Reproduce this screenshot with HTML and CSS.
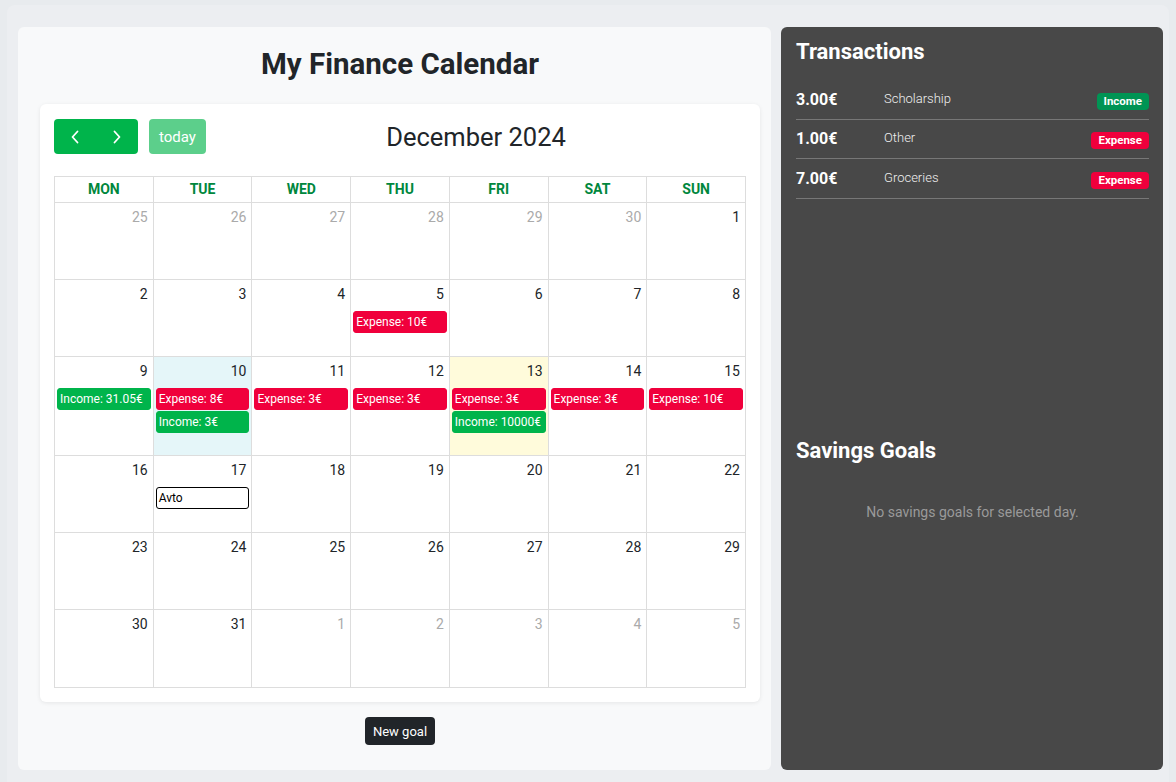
FILE: index.html
```html
<!DOCTYPE html>
<html lang="en">
<head>
<meta charset="utf-8">
<title>My Finance Calendar</title>
<link rel="stylesheet" href="styles.css">
</head>
<body>
<div class="app">
  <div class="layout">
    <main class="left-panel">
      <h2 class="page-title">My Finance Calendar</h2>
      <section class="cal-card">
        <div class="toolbar">
          <div class="tb-left">
            <div class="btn-group">
              <button class="btn btn-green btn-icon" aria-label="prev">
                <svg width="10" height="14" viewBox="0 0 10 14"><path d="M7.5 1.5 L2.5 7 L7.5 12.5" fill="none" stroke="#fff" stroke-width="1.8" stroke-linecap="round" stroke-linejoin="round"/></svg>
              </button>
              <button class="btn btn-green btn-icon" aria-label="next">
                <svg width="10" height="14" viewBox="0 0 10 14"><path d="M2.5 1.5 L7.5 7 L2.5 12.5" fill="none" stroke="#fff" stroke-width="1.8" stroke-linecap="round" stroke-linejoin="round"/></svg>
              </button>
            </div>
            <button class="btn btn-today">today</button>
          </div>
          <h2 class="cal-title">December 2024</h2>
          <div class="tb-right"></div>
        </div>
        <div class="grid">
          <div class="hd">Mon</div><div class="hd">Tue</div><div class="hd">Wed</div><div class="hd">Thu</div><div class="hd">Fri</div><div class="hd">Sat</div><div class="hd">Sun</div>

          <div class="day other"><div class="num">25</div></div>
          <div class="day other"><div class="num">26</div></div>
          <div class="day other"><div class="num">27</div></div>
          <div class="day other"><div class="num">28</div></div>
          <div class="day other"><div class="num">29</div></div>
          <div class="day other"><div class="num">30</div></div>
          <div class="day"><div class="num">1</div></div>

          <div class="day"><div class="num">2</div></div>
          <div class="day"><div class="num">3</div></div>
          <div class="day"><div class="num">4</div></div>
          <div class="day"><div class="num">5</div><div class="events"><div class="ev ev-exp">Expense: 10€</div></div></div>
          <div class="day"><div class="num">6</div></div>
          <div class="day"><div class="num">7</div></div>
          <div class="day"><div class="num">8</div></div>

          <div class="day"><div class="num">9</div><div class="events"><div class="ev ev-inc">Income: 31.05€</div></div></div>
          <div class="day selected"><div class="num">10</div><div class="events"><div class="ev ev-exp">Expense: 8€</div><div class="ev ev-inc">Income: 3€</div></div></div>
          <div class="day"><div class="num">11</div><div class="events"><div class="ev ev-exp">Expense: 3€</div></div></div>
          <div class="day"><div class="num">12</div><div class="events"><div class="ev ev-exp">Expense: 3€</div></div></div>
          <div class="day today"><div class="num">13</div><div class="events"><div class="ev ev-exp">Expense: 3€</div><div class="ev ev-inc">Income: 10000€</div></div></div>
          <div class="day"><div class="num">14</div><div class="events"><div class="ev ev-exp">Expense: 3€</div></div></div>
          <div class="day"><div class="num">15</div><div class="events"><div class="ev ev-exp">Expense: 10€</div></div></div>

          <div class="day"><div class="num">16</div></div>
          <div class="day"><div class="num">17</div><div class="events"><div class="ev ev-goal">Avto</div></div></div>
          <div class="day"><div class="num">18</div></div>
          <div class="day"><div class="num">19</div></div>
          <div class="day"><div class="num">20</div></div>
          <div class="day"><div class="num">21</div></div>
          <div class="day"><div class="num">22</div></div>

          <div class="day"><div class="num">23</div></div>
          <div class="day"><div class="num">24</div></div>
          <div class="day"><div class="num">25</div></div>
          <div class="day"><div class="num">26</div></div>
          <div class="day"><div class="num">27</div></div>
          <div class="day"><div class="num">28</div></div>
          <div class="day"><div class="num">29</div></div>

          <div class="day"><div class="num">30</div></div>
          <div class="day"><div class="num">31</div></div>
          <div class="day other"><div class="num">1</div></div>
          <div class="day other"><div class="num">2</div></div>
          <div class="day other"><div class="num">3</div></div>
          <div class="day other"><div class="num">4</div></div>
          <div class="day other"><div class="num">5</div></div>
        </div>
      </section>
      <div class="actions">
        <button class="btn btn-dark">New goal</button>
      </div>
    </main>
    <aside class="right-panel">
      <section class="tx-section">
        <h3 class="panel-title">Transactions</h3>
        <ul class="tx-list">
          <li class="tx-row"><span class="tx-amount">3.00€</span><span class="tx-desc">Scholarship</span><span class="badge badge-inc">Income</span></li>
          <li class="tx-row"><span class="tx-amount">1.00€</span><span class="tx-desc">Other</span><span class="badge badge-exp">Expense</span></li>
          <li class="tx-row"><span class="tx-amount">7.00€</span><span class="tx-desc">Groceries</span><span class="badge badge-exp">Expense</span></li>
        </ul>
      </section>
      <section class="goals-section">
        <h3 class="panel-title">Savings Goals</h3>
        <p class="empty">No savings goals for selected day.</p>
      </section>
    </aside>
  </div>
</div>
</body>
</html>
```
FILE: styles.css
```css
* { box-sizing: border-box; }
html, body { margin: 0; padding: 0; }
body {
  background: #e8ebee;
  font-family: Roboto, "Noto Sans", sans-serif;
  color: #212529;
  overflow: hidden;
}
.app {
  margin: 5px 7px 0;
  padding: 22px 6px 20px 11px;
  background: #eceef1;
  border-radius: 8px;
}
.layout {
  display: flex;
  gap: 10px;
  align-items: stretch;
}
.left-panel {
  flex: 1;
  background: #f8f9fa;
  border-radius: 6px;
  padding: 18px 11px 25px 22px;
}
.page-title {
  margin: 0 0 21px;
  text-align: center;
  font-size: 29.5px;
  line-height: 38px;
  font-weight: 700;
  color: #212529;
}
.cal-card {
  background: #fff;
  border-radius: 6px;
  box-shadow: 0 1px 4px rgba(0,0,0,0.08);
  padding: 15px 14px 14px;
}
.toolbar {
  display: flex;
  justify-content: space-between;
  align-items: center;
  height: 35px;
  margin-bottom: 22px;
}
.tb-left { display: flex; gap: 11px; }
.tb-right { width: 0; }
.btn-group { display: flex; }
.btn {
  border: none;
  font-family: inherit;
  color: #fff;
  cursor: pointer;
}
.btn-green {
  background: #00b44b;
  height: 35px;
  width: 42px;
  display: flex;
  align-items: center;
  justify-content: center;
}
.btn-group .btn:first-child { border-radius: 4px 0 0 4px; }
.btn-group .btn:last-child { border-radius: 0 4px 4px 0; }
.btn-today {
  background: #5ccf8b;
  height: 35px;
  padding: 0 10px;
  border-radius: 4px;
  font-size: 15px;
  width: 57px;
}
.cal-title {
  margin: 0;
  font-size: 25.5px;
  font-weight: 400;
  color: #212529;
}
.grid {
  display: grid;
  grid-template-columns: repeat(7, 1fr);
  grid-template-rows: 25px 76px 76px auto 76px 76px 77px;
  gap: 1px;
  background: #dddddd;
  border: 1px solid #dddddd;
}
.hd {
  background: #fff;
  text-align: center;
  text-transform: uppercase;
  font-weight: 700;
  font-size: 14px;
  line-height: 25px;
  color: #00873d;
}
.day {
  background: #fff;
  display: flex;
  flex-direction: column;
  min-height: 76px;
}
.day.selected { background: #e5f6f9; }
.day.today { background: #fffbdb; }
.num {
  text-align: right;
  padding: 4px 5px 0;
  font-size: 14px;
  line-height: 21px;
  color: #212529;
}
.day.other .num { color: #aaaaaa; }
.events {
  padding: 6px 2px 22px;
  display: flex;
  flex-direction: column;
  gap: 1px;
}
.ev {
  height: 22px;
  line-height: 20px;
  font-size: 12px;
  padding: 0 2px;
  border-radius: 3px;
  border: 1px solid transparent;
  color: #fff;
  white-space: nowrap;
  overflow: hidden;
}
.ev-exp { background: #f0003c; border-color: #f0003c; }
.ev-inc { background: #00b44b; border-color: #00b44b; }
.ev-goal { background: #fff; border-color: #000; color: #000; }
.actions {
  display: flex;
  justify-content: center;
  margin-top: 15px;
}
.btn-dark {
  background: #212529;
  height: 28px;
  padding: 0 8px;
  border-radius: 4px;
  font-size: 13px;
}
.right-panel {
  width: 382px;
  background: #484848;
  border-radius: 6px;
  padding: 12px 14px 20px 15px;
  color: #fff;
  display: flex;
  flex-direction: column;
}
.tx-section { min-height: 399px; }
.panel-title {
  margin: 0;
  font-size: 22px;
  line-height: 26px;
  font-weight: 700;
  color: #fff;
}
.tx-list {
  list-style: none;
  margin: 15px 0 0;
  padding: 0;
}
.tx-row {
  display: flex;
  align-items: center;
  height: 39.5px;
  border-bottom: 1px solid #777;
}
.tx-amount {
  width: 88px;
  font-weight: 700;
  font-size: 16px;
}
.tx-desc {
  flex: 1;
  font-size: 13px;
  font-weight: 300;
  color: #f0f0f0;
  margin-top: -2px;
}
.badge {
  font-size: 11.5px;
  font-weight: 700;
  line-height: 13px;
  padding: 2px 7px;
  border-radius: 4px;
  color: #fff;
  margin-top: 4px;
}
.badge-inc { background: #009454; }
.badge-exp { background: #f0003c; }
.empty {
  margin: 38px 0 0;
  text-align: center;
  font-size: 14px;
  line-height: 20px;
  color: #9a9a9a;
}
```
